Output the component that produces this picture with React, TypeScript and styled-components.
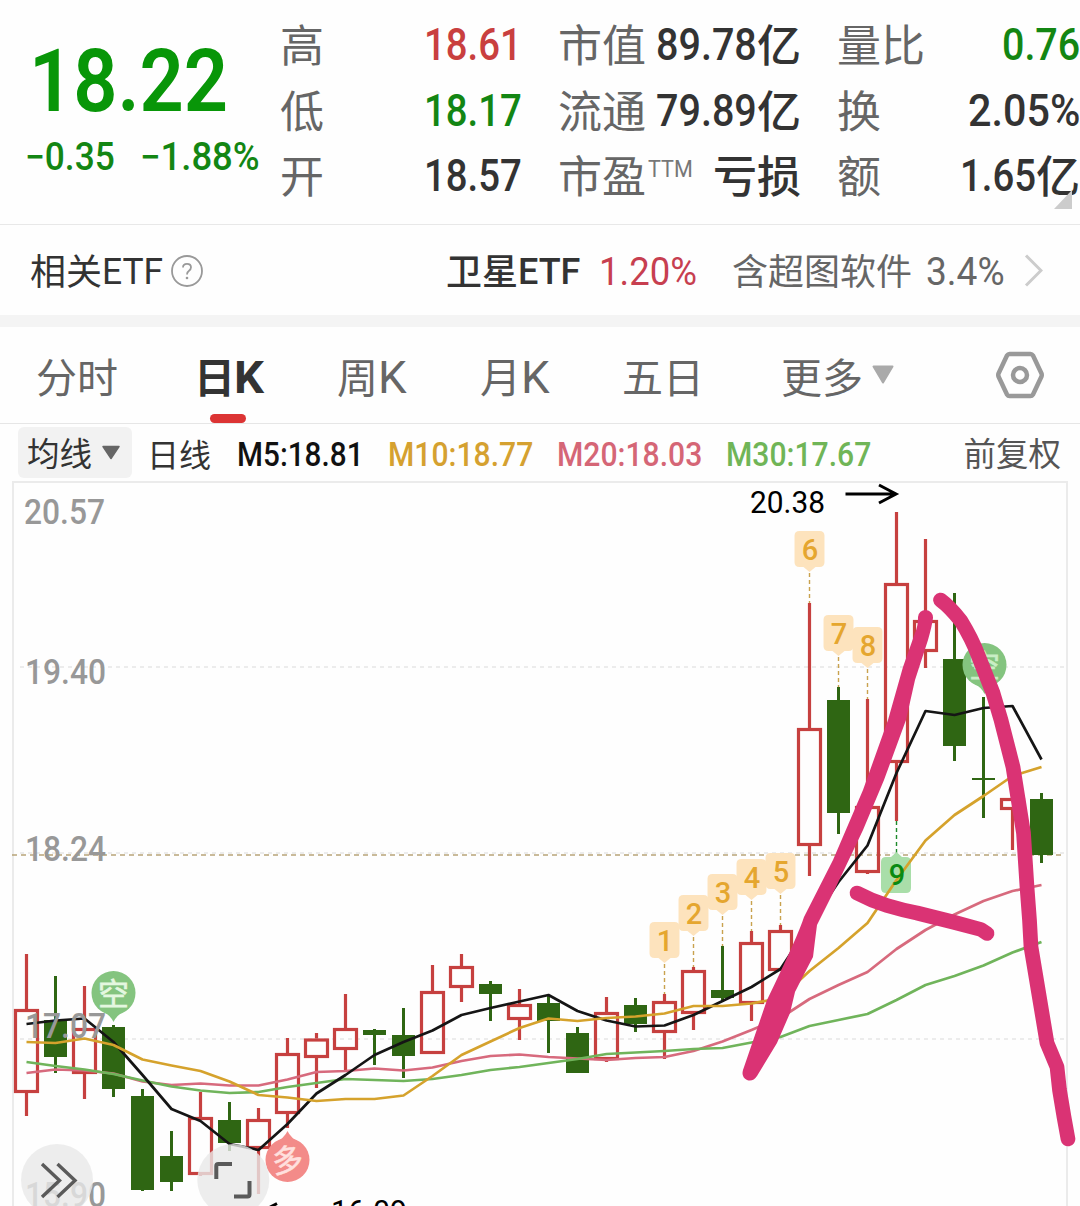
import React, { useLayoutEffect, useRef, useState } from 'react';
import styled, { createGlobalStyle } from 'styled-components';

const LATIN = `Roboto, "Liberation Sans", sans-serif`;
const HAN = `"Noto Sans CJK SC", "Noto Sans", sans-serif`;

const Global = createGlobalStyle`
  *, *::before, *::after { box-sizing: border-box; }
  html, body { margin: 0; padding: 0; background: #fefefe; }
  body { overflow: hidden; font-family: ${LATIN}; color: #333; }
`;

const Page = styled.main`
  width: 1080px;
  height: 1206px;
  overflow: hidden;
  display: flex;
  flex-direction: column;
  background: #fefefe;
`;

/* ---------- text primitives ---------- */

const FitBox = styled.span<{ $w: number; $size: number; $weight: number; $color: string; $gap: number; $drop: number }>`
  display: block;
  flex: none;
  width: ${p => p.$w}px;
  height: ${p => p.$size}px;
  line-height: ${p => p.$size}px;
  margin-left: ${p => p.$gap}px;
  margin-top: ${p => p.$drop}px;
  font-family: ${LATIN};
  font-size: ${p => p.$size}px;
  font-weight: ${p => p.$weight};
  color: ${p => p.$color};
  white-space: nowrap;
`;

const FitInner = styled.span`
  display: inline-block;
  transform-origin: 0 50%;
`;

type FitProps = { children: string; w: number; size: number; weight?: number; color?: string; gap?: number; drop?: number };

/* Condenses a run of digits to a fixed width. */
function Fit({ children, w, size, weight = 500, color = '#333', gap = 0, drop = 0 }: FitProps) {
  const ref = useRef<HTMLSpanElement>(null);
  const [scale, setScale] = useState(1);
  useLayoutEffect(() => {
    if (ref.current) setScale(w / ref.current.offsetWidth);
  }, [w, children, size]);
  return (
    <FitBox $w={w} $size={size} $weight={weight} $color={color} $gap={gap} $drop={drop}>
      <FitInner ref={ref} style={{ transform: `scaleX(${scale})` }}>{children}</FitInner>
    </FitBox>
  );
}

const Han = styled.span<{ $size: number; $color?: string; $weight?: number; $gap?: number; $lift?: number }>`
  display: block;
  flex: none;
  font-family: ${HAN};
  font-size: ${p => p.$size}px;
  line-height: 1;
  font-weight: ${p => p.$weight ?? 400};
  color: ${p => p.$color ?? '#666'};
  margin: 0 0 ${p => p.$lift ?? 0.07}em ${p => p.$gap ?? 0}px;
  white-space: nowrap;
`;

/* ---------- quote header ---------- */

const Quote = styled.header`
  position: relative;
  flex: none;
  height: 225px;
  border-bottom: 1px solid #e8e8e8;
  display: grid;
  grid-template-columns: 280px 242px 36px 243px 36px 243px;
`;

const PriceBlock = styled.div`
  display: flex;
  flex-direction: column;
  padding: 37px 0 0 27px;
`;

const Changes = styled.div`
  display: flex;
  margin-top: 13px;
`;

const Stats = styled.dl<{ $col: number }>`
  grid-column: ${p => p.$col};
  margin: 0;
  padding-top: 12px;
`;

const Stat = styled.div`
  height: 65.5px;
  display: flex;
  align-items: center;
  justify-content: space-between;
`;

const Pair = styled.div`
  display: flex;
  align-items: center;
`;

const Sup = styled.div`
  display: flex;
  align-items: flex-start;
  height: 44px;
`;

const Corner = styled.svg`
  position: absolute;
  right: 8px;
  top: 190px;
  width: 18px;
  height: 19px;
`;

/* ---------- ETF strip ---------- */

const EtfRow = styled.section`
  flex: none;
  height: 90px;
  padding: 1px 37px 0 30px;
  display: flex;
  align-items: center;
  justify-content: space-between;
`;

const Spacer = styled.div`
  flex: none;
  height: 12px;
  background: #f4f4f4;
`;

/* ---------- tabs ---------- */

const Tabs = styled.nav`
  flex: none;
  height: 97px;
  border-bottom: 1px solid #e6e6e6;
  padding: 0 35px 0 36px;
  display: grid;
  grid-template-columns: 158px 143px 143px 142px 159px 1fr auto;
`;

const Tab = styled.div<{ $active?: boolean }>`
  position: relative;
  display: flex;
  align-items: center;
  &::after {
    content: '';
    display: ${p => (p.$active ? 'block' : 'none')};
    position: absolute;
    left: 16px;
    bottom: 0;
    width: 36px;
    height: 9px;
    border-radius: 4.5px;
    background: #dc3434;
  }
`;

const Caret = styled.svg<{ $gap: number }>`
  display: block;
  flex: none;
  margin-left: ${p => p.$gap}px;
`;

/* ---------- moving averages ---------- */

const MaRow = styled.section`
  flex: none;
  height: 57px;
  padding: 0 19px 0 18px;
  display: flex;
  align-items: center;
`;

const Picker = styled.div`
  width: 114px;
  height: 51px;
  border-radius: 6px;
  background: #f2f2f2;
  display: flex;
  align-items: center;
  padding-left: 9px;
`;

const Push = styled.div`
  margin-left: auto;
  display: flex;
`;

/* ---------- chart ---------- */

const Plot = styled.svg`
  flex: none;
  display: block;
  width: 1080px;
  height: 725px;
`;

type Candle = [kind: 'r' | 'g', high: number, top: number, bottom: number, low: number];

const candles: Candle[] = [
  ['r', 954, 1009, 1093, 1116], ['g', 976, 1020, 1057, 1073], ['r', 986, 1028, 1074, 1099],
  ['g', 1025, 1027, 1089, 1097], ['g', 1089, 1096, 1190, 1191], ['g', 1131, 1156, 1182, 1191],
  ['r', 1092, 1117, 1175, 1176], ['g', 1102, 1120, 1143, 1151], ['r', 1108, 1119, 1149, 1194],
  ['r', 1038, 1053, 1114, 1128], ['r', 1033, 1038.5, 1058, 1088], ['r', 994, 1028, 1050, 1071],
  ['g', 1029, 1030, 1035, 1065], ['g', 1008, 1035, 1056, 1078], ['r', 965, 991, 1054, 1054],
  ['r', 954, 966, 988, 1002], ['g', 981, 984, 994, 1021], ['r', 989, 1004, 1020, 1040],
  ['g', 996, 1003, 1021, 1053], ['g', 1027, 1033, 1073, 1073], ['r', 997, 1012, 1060, 1062],
  ['g', 998, 1005, 1024, 1032], ['r', 994, 1001, 1033, 1059], ['r', 967, 970, 1014, 1030],
  ['g', 946, 990, 998, 1002], ['r', 931, 942, 1004, 1021], ['r', 925, 930, 971, 971],
  ['r', 603, 728, 846, 876], ['g', 687, 700, 813, 834], ['r', 699, 806, 873, 874],
  ['r', 512, 583, 763, 821], ['r', 539, 620, 652, 668], ['g', 593, 659, 746, 761],
  ['g', 697, 778, 780, 818], ['r', 798, 798, 810, 850], ['g', 793, 799, 855, 863],
];

const averages: { color: string; ys: number[] }[] = [
  { color: '#d76a7d', ys: [1073, 1069.5, 1070.5, 1073.5, 1081.5, 1085, 1083.5, 1085.5, 1085.5, 1079.5, 1072, 1071, 1068.5, 1070.5, 1067.5, 1061, 1056, 1054.5, 1057, 1058.5, 1060, 1058, 1057, 1051, 1041.5, 1030, 1018, 999, 985, 972, 949, 930, 914.5, 901, 891, 885] },
  { color: '#70b45b', ys: [1062, 1066, 1069.5, 1074, 1080.5, 1086.5, 1090.5, 1093, 1092, 1087, 1083, 1079, 1080, 1081, 1079, 1075, 1070, 1067, 1063, 1059, 1054, 1052.5, 1051, 1049, 1048, 1042.5, 1037, 1026, 1020, 1014, 1000, 985, 976, 965.5, 952.5, 942] },
  { color: '#151515', ys: [1024, 1020.5, 1018.5, 1042, 1075, 1109, 1121, 1144, 1150, 1124, 1093.5, 1075, 1055, 1042, 1030.5, 1015, 1008, 1001.5, 995, 1011, 1020.5, 1026.5, 1025.5, 1015, 1001, 987, 969, 925, 882, 845.5, 773, 711, 715, 708, 706, 759.5] },
  { color: '#d5a22c', ys: [1042, 1043, 1038.5, 1045, 1059.5, 1065.5, 1071, 1081.5, 1095, 1097.5, 1101, 1099, 1099, 1095.5, 1076, 1055, 1041.5, 1028, 1018.5, 1021, 1018, 1016.5, 1013.5, 1006, 1006, 1003.5, 998, 971, 948, 923, 880, 840.5, 815, 796, 776, 767] },
];

const flags: { i: number; top: number; end: number }[] = [
  { i: 22, top: 922, end: 994 }, { i: 23, top: 895, end: 967 }, { i: 24, top: 874, end: 946 },
  { i: 25, top: 859, end: 931 }, { i: 26, top: 853, end: 925 }, { i: 27, top: 531, end: 603 },
  { i: 28, top: 615, end: 687 }, { i: 29, top: 627, end: 699 },
];

const axis: [label: string, x: number, baseline: number][] = [
  ['20.57', 24, 524], ['19.40', 25, 684], ['18.24', 25, 861], ['17.07', 25, 1038], ['15.90', 25, 1207],
];

const cx = (i: number) => 26.5 + i * 29;

function CandleMark({ c, x }: { c: Candle; x: number }) {
  const [kind, high, top, bottom, low] = c;
  if (kind === 'g') {
    return (
      <g fill="#2f6613">
        <rect x={x - 1.5} y={high} width={3} height={low - high} />
        <rect x={x - 11.5} y={top} width={23} height={bottom - top} />
      </g>
    );
  }
  return (
    <g stroke="#c6403f" strokeWidth={3.2} fill="none">
      {top > high && <path d={`M${x} ${high}V${top}`} />}
      {low > bottom && <path d={`M${x} ${bottom}V${low}`} />}
      <rect x={x - 11} y={top + 1.5} width={22} height={bottom - top - 3} />
    </g>
  );
}

function Flag({ x, top, label, end }: { x: number; top: number; label: string; end: number }) {
  return (
    <g>
      <path d={`M${x} ${top + 42}V${end}`} stroke="#c9a24e" strokeWidth={1.4} strokeDasharray="4 3" />
      <path
        d={`M${x - 10} ${top}h20q5 0 5 5v26q0 5 -5 5h-4l-6 5l-6 -5h-4q-5 0 -5 -5v-26q0 -5 5 -5z`}
        fill="#fde3bd"
      />
      <text x={x + 0.5} y={top + 28.5} fontSize={29} fontWeight={500} textAnchor="middle" fill="#e5a62f" fontFamily={LATIN}>{label}</text>
    </g>
  );
}

function Bubble({ x, y, label, color, ink, up }: { x: number; y: number; label: string; color: string; ink: string; up?: boolean }) {
  const s = up ? -1 : 1;
  return (
    <g>
      <path d={`M${x - 13} ${y + s * 17}Q${x - 3} ${y + s * 22} ${x} ${y + s * 29}Q${x + 3} ${y + s * 22} ${x + 13} ${y + s * 17}z`} fill={color} />
      <circle cx={x} cy={y} r={22} fill={color} />
      <text
        x={x}
        y={y + 11.5}
        fontSize={31}
        textAnchor="middle"
        fill={ink}
        stroke={ink}
        strokeWidth={0.6}
        fontFamily={HAN}
        transform={up ? `rotate(-8 ${x} ${y})` : undefined}
      >
        {label}
      </text>
    </g>
  );
}

function Chart() {
  return (
    <Plot viewBox="0 481 1080 725">
      <g stroke="#e6e6e6" strokeWidth={1.5} strokeDasharray="4 4">
        <path d="M20 667H1064M20 853H1064M20 1039H1064" />
      </g>
      <path d="M13 1206V482H1067V1206" fill="none" stroke="#ebebeb" strokeWidth={2} />
      <path d="M12 855H1064" stroke="#b8a478" strokeWidth={1.6} strokeDasharray="5 4" />

      {candles.map((c, i) => <CandleMark key={i} c={c} x={cx(i)} />)}

      <path d="M896.5 821V853" stroke="#1d8a2b" strokeWidth={1.4} strokeDasharray="4 3" />
      <path d="M887 857h4l5.500 -5l5.500 5h4q5 0 5 5v26q0 5 -5 5h-20q-5 0 -5 -5v-26q0 -5 5 -5z" fill="#a9dea9" />

      {averages.map(a => (
        <polyline
          key={a.color}
          points={a.ys.map((y, i) => `${cx(i)},${y}`).join(' ')}
          fill="none"
          stroke={a.color}
          strokeWidth={2.7}
          strokeLinejoin="round"
        />
      ))}

      <text x={897} y={885} fontSize={29} fontWeight={500} textAnchor="middle" fill="#0a8a12" fontFamily={LATIN}>9</text>

      {flags.map((f, n) => <Flag key={f.i} x={cx(f.i)} top={f.top} end={f.end} label={String(n + 1)} />)}

      <Bubble x={113.5} y={993} label="空" color="#84c47f" ink="#e4f7e0" />
      <Bubble x={984.5} y={665} label="空" color="#84c47f" ink="#c9eec5" />
      <Bubble x={287.5} y={1160} label="多" color="#f38b89" ink="#ffe0de" up />

      {axis.map(([label, x, y]) => (
        <text key={label} x={x} y={y} fontSize={35} fontWeight={500} fill="#989898" fontFamily={LATIN} textLength={81} lengthAdjust="spacingAndGlyphs">{label}</text>
      ))}

      <text x={750} y={513} fontSize={31} fill="#000" fontFamily={LATIN} textLength={75} lengthAdjust="spacingAndGlyphs">20.38</text>
      <path d="M845.500 494H895M879 485L896 494L879 503" fill="none" stroke="#000" strokeWidth={3} />
      <text x={331} y={1222} fontSize={31} fill="#000" fontFamily={LATIN} textLength={76} lengthAdjust="spacingAndGlyphs">16.09</text>
      <path d="M277 1203.500L259 1213" stroke="#000" strokeWidth={3} />

      <g fill="#e8e8e8" fillOpacity={0.8}>
        <circle cx={57} cy={1180} r={36} />
        <circle cx={233.300} cy={1180} r={36} />
      </g>
      <g fill="none" stroke="#5a5a5a">
        <path d="M42 1164L59.500 1180.500L42 1197M57.500 1164L75 1180.500L57.500 1197" strokeWidth={3.4} />
        <path d="M216.300 1179V1166Q216.300 1164 218.300 1164H232M249.500 1181V1194.500Q249.500 1196.500 247.500 1196.500H234" strokeWidth={4} />
      </g>

      <path
        d="M918 617C918 624 917 628 915 633L903 667L888 720L863 790L833 860L804 917Q798 936 767 1000L743 1070Q741 1077 747 1080Q753 1082 757 1076L777 1043L790 1013L795 992Q803 976 813 957Q815 940 817 925L835 889L863 830L884 780L906 720L915 680L928 640Q932 626 933 618A7.500 7.500 0 0 0 918 617Z"
        fill="#da3374"
      />
      <g fill="none" stroke="#da3374" strokeWidth={14.7} strokeLinecap="round" strokeLinejoin="round">
        <path d="M940.500 600Q950 607 961 621Q972 639 978 655L993 693L1001 720L1013 767L1023.500 833L1027 887L1029.500 920L1031 947L1034 965L1041.500 1010L1047 1043L1057 1067L1059.500 1090L1064 1117L1068 1139" />
        <path d="M857 893Q872 901 887 905.500Q902 910 917 913L953 922L981 929.500L987 933.500" />
      </g>
    </Plot>
  );
}

export default function App() {
  const green = '#138613';
  return (
    <Page>
      <Global />
      <Quote>
        <PriceBlock>
          <Fit w={199} size={88} weight={600} color="#089608" gap={2}>18.22</Fit>
          <Changes>
            <Fit w={90} size={38} color={green} gap={-2}>−0.35</Fit>
            <Fit w={120} size={38} color={green} gap={25}>−1.88%</Fit>
          </Changes>
        </PriceBlock>
        <Stats $col={2}>
          <Stat><Han $size={44}>高</Han><Fit w={98} size={45} color="#c93f3f">18.61</Fit></Stat>
          <Stat><Han $size={44}>低</Han><Fit w={98} size={45} color={green}>18.17</Fit></Stat>
          <Stat><Han $size={44}>开</Han><Fit w={98} size={45}>18.57</Fit></Stat>
        </Stats>
        <Stats $col={4}>
          <Stat><Han $size={44}>市值</Han><Pair><Fit w={101} size={45}>89.78</Fit><Han $size={44} $color="#333" $weight={500}>亿</Han></Pair></Stat>
          <Stat><Han $size={44}>流通</Han><Pair><Fit w={101} size={45}>79.89</Fit><Han $size={44} $color="#333" $weight={500}>亿</Han></Pair></Stat>
          <Stat>
            <Pair>
              <Han $size={44}>市盈</Han>
              <Sup><Fit w={45} size={23} weight={400} color="#777" gap={2} drop={4}>TTM</Fit></Sup>
            </Pair>
            <Han $size={44} $color="#333" $weight={500}>亏损</Han>
          </Stat>
        </Stats>
        <Stats $col={6}>
          <Stat><Han $size={44}>量比</Han><Fit w={78} size={45} color={green}>0.76</Fit></Stat>
          <Stat><Han $size={44}>换</Han><Fit w={112} size={45}>2.05%</Fit></Stat>
          <Stat><Han $size={44}>额</Han><Pair><Fit w={76} size={45}>1.65</Fit><Han $size={44} $color="#333" $weight={500}>亿</Han></Pair></Stat>
        </Stats>
        <Corner viewBox="0 0 18 19"><path d="M18 0V19H0z" fill="#ccc" /></Corner>
      </Quote>

      <EtfRow>
        <Pair>
          <Han $size={36} $color="#333">相关</Han>
          <Fit w={61} size={36} weight={400} gap={0} drop={3}>ETF</Fit>
          <Caret $gap={7} width="34" height="34" viewBox="0 0 34 34">
            <circle cx="17" cy="17" r="15" fill="none" stroke="#999" strokeWidth="1.8" />
            <path d="M13 13.500Q13 9.800 17 9.800T21 13.300Q21 15.500 18.800 17Q17 18.300 17 20.500" fill="none" stroke="#999" strokeWidth="1.8" />
            <circle cx="17" cy="24" r="1.300" fill="#999" />
          </Caret>
        </Pair>
        <Pair>
          <Han $size={36} $color="#333" $weight={500}>卫星</Han>
          <Fit w={62} size={36} gap={0} drop={3}>ETF</Fit>
          <Fit w={98} size={38} weight={400} color="#c73f50" gap={19} drop={3}>1.20%</Fit>
          <Han $size={36} $gap={35}>含超图软件</Han>
          <Fit w={79} size={38} weight={400} color="#666" gap={14} drop={3}>3.4%</Fit>
          <Caret $gap={19} width="19" height="33" viewBox="0 0 19 33">
            <path d="M2 1.500L17 16.500L2 31.500" fill="none" stroke="#ccc" strokeWidth="3" />
          </Caret>
        </Pair>
      </EtfRow>
      <Spacer />

      <Tabs>
        <Tab><Han $size={41} $lift={0}>分时</Han></Tab>
        <Tab $active><Han $size={41} $lift={0} $color="#333" $weight={700}>日</Han><Fit w={30} size={44} weight={700} gap={-1} drop={5}>K</Fit></Tab>
        <Tab><Han $size={41} $lift={0}>周</Han><Fit w={29} size={44} weight={400} color="#666" drop={5}>K</Fit></Tab>
        <Tab><Han $size={41} $lift={0}>月</Han><Fit w={29} size={44} weight={400} color="#666" drop={5}>K</Fit></Tab>
        <Tab><Han $size={41} $lift={0}>五日</Han></Tab>
        <Tab>
          <Han $size={41} $lift={0}>更多</Han>
          <Caret $gap={8} width="24" height="20" viewBox="0 0 24 20">
            <path d="M2.500 1.500H21.500L12 17.500z" fill="#aaa" stroke="#aaa" strokeWidth="2" strokeLinejoin="round" />
          </Caret>
        </Tab>
        <Tab>
          <Caret $gap={0} width="50" height="48" viewBox="0 0 50 48">
            <path d="M14.500 3H35.500Q37 3 38 4.500L46.500 22.500Q47 24 46.500 25.500L38 43.500Q37 45 35.500 45H14.500Q13 45 12 43.500L3.500 25.500Q3 24 3.500 22.500L12 4.500Q13 3 14.500 3z" fill="none" stroke="#999" strokeWidth="4.500" strokeLinejoin="round" />
            <circle cx="25" cy="24" r="7" fill="none" stroke="#999" strokeWidth="4.500" />
          </Caret>
        </Tab>
      </Tabs>

      <MaRow>
        <Picker>
          <Han $size={32.5} $lift={0} $color="#333">均线</Han>
          <Caret $gap={9} width="20" height="16" viewBox="0 0 20 16">
            <path d="M2 1.500H18L10 13.500z" fill="#666" stroke="#666" strokeWidth="1.500" strokeLinejoin="round" />
          </Caret>
        </Picker>
        <Han $size={32} $lift={0} $color="#333" $gap={15}>日线</Han>
        <Fit w={127} size={33} color="#111" gap={26} drop={3}>M5:18.81</Fit>
        <Fit w={145} size={33} color="#d5a130" gap={24} drop={3}>M10:18.77</Fit>
        <Fit w={145} size={33} color="#d56676" gap={24} drop={3}>M20:18.03</Fit>
        <Fit w={145} size={33} color="#70b557" gap={24} drop={3}>M30:17.67</Fit>
        <Push><Han $size={32.5} $lift={0} $color="#555">前复权</Han></Push>
      </MaRow>
      <Chart />
    </Page>
  );
}
